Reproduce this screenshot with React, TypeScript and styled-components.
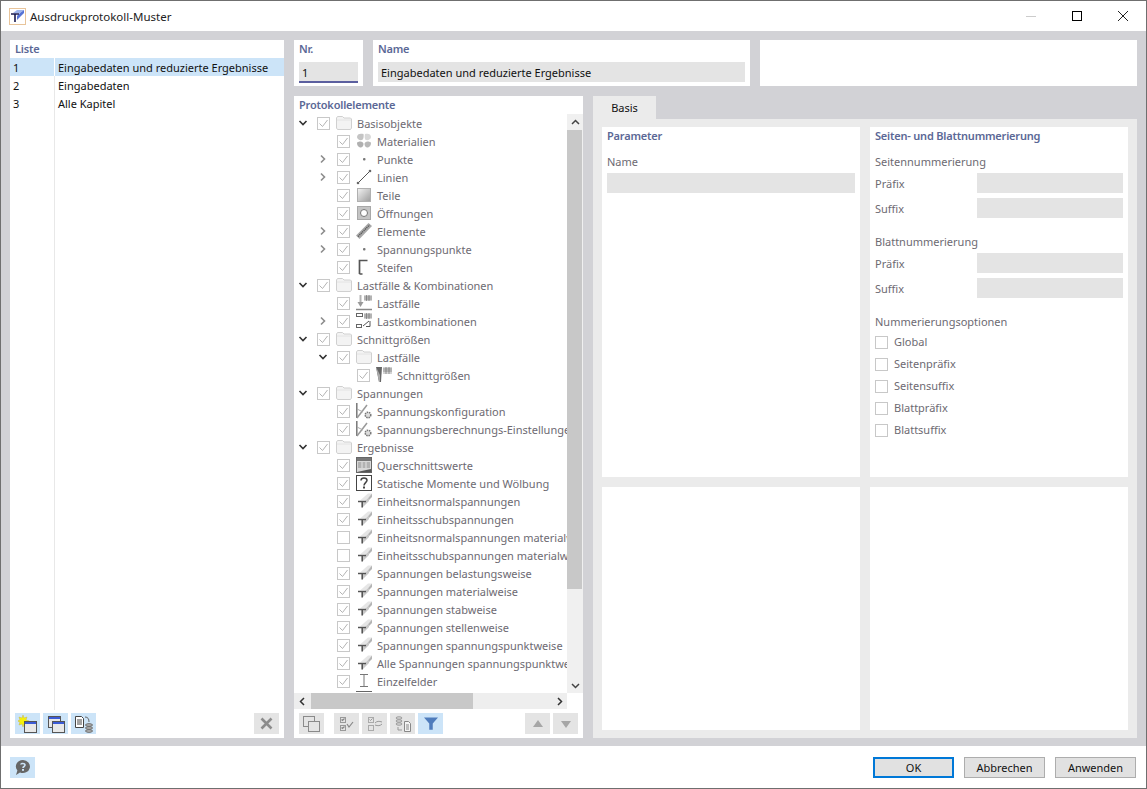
import { FC, ReactNode } from 'react';
import styled, { createGlobalStyle } from 'styled-components';

type IconName =
  | 'folder' | 'materials' | 'point' | 'line' | 'part' | 'opening' | 'element' | 'stiffener'
  | 'loadCase' | 'loadCombo' | 'forces' | 'config' | 'table' | 'question' | 'beam' | 'ibeam' | 'cut';

interface TreeItem {
  level: number;
  label?: string;
  icon: IconName;
  toggle?: 'open' | 'closed';
  unchecked?: boolean;
}

const tree: TreeItem[] = [
  { level: 0, label: 'Basisobjekte', icon: 'folder', toggle: 'open' },
  { level: 1, label: 'Materialien', icon: 'materials' },
  { level: 1, label: 'Punkte', icon: 'point', toggle: 'closed' },
  { level: 1, label: 'Linien', icon: 'line', toggle: 'closed' },
  { level: 1, label: 'Teile', icon: 'part' },
  { level: 1, label: 'Öffnungen', icon: 'opening' },
  { level: 1, label: 'Elemente', icon: 'element', toggle: 'closed' },
  { level: 1, label: 'Spannungspunkte', icon: 'point', toggle: 'closed' },
  { level: 1, label: 'Steifen', icon: 'stiffener' },
  { level: 0, label: 'Lastfälle & Kombinationen', icon: 'folder', toggle: 'open' },
  { level: 1, label: 'Lastfälle', icon: 'loadCase' },
  { level: 1, label: 'Lastkombinationen', icon: 'loadCombo', toggle: 'closed' },
  { level: 0, label: 'Schnittgrößen', icon: 'folder', toggle: 'open' },
  { level: 1, label: 'Lastfälle', icon: 'folder', toggle: 'open' },
  { level: 2, label: 'Schnittgrößen', icon: 'forces' },
  { level: 0, label: 'Spannungen', icon: 'folder', toggle: 'open' },
  { level: 1, label: 'Spannungskonfiguration', icon: 'config' },
  { level: 1, label: 'Spannungsberechnungs-Einstellungen', icon: 'config' },
  { level: 0, label: 'Ergebnisse', icon: 'folder', toggle: 'open' },
  { level: 1, label: 'Querschnittswerte', icon: 'table' },
  { level: 1, label: 'Statische Momente und Wölbung', icon: 'question' },
  { level: 1, label: 'Einheitsnormalspannungen', icon: 'beam' },
  { level: 1, label: 'Einheitsschubspannungen', icon: 'beam' },
  { level: 1, label: 'Einheitsnormalspannungen materialweise', icon: 'beam', unchecked: true },
  { level: 1, label: 'Einheitsschubspannungen materialweise', icon: 'beam', unchecked: true },
  { level: 1, label: 'Spannungen belastungsweise', icon: 'beam' },
  { level: 1, label: 'Spannungen materialweise', icon: 'beam' },
  { level: 1, label: 'Spannungen stabweise', icon: 'beam' },
  { level: 1, label: 'Spannungen stellenweise', icon: 'beam' },
  { level: 1, label: 'Spannungen spannungspunktweise', icon: 'beam' },
  { level: 1, label: 'Alle Spannungen spannungspunktweise', icon: 'beam' },
  { level: 1, label: 'Einzelfelder', icon: 'ibeam' },
  { level: 1, icon: 'cut' },
];

const protocols = [
  { nr: 1, name: 'Eingabedaten und reduzierte Ergebnisse' },
  { nr: 2, name: 'Eingabedaten' },
  { nr: 3, name: 'Alle Kapitel' },
];

const options = ['Global', 'Seitenpräfix', 'Seitensuffix', 'Blattpräfix', 'Blattsuffix'];

const tableGrid = (
  <>
    <path d="M8 0h8v6H8z" fill="#d4d4d4" />
    <path d="M8 2h8M8 4h8M10.500 0v6M13 0v6" stroke="#666" strokeWidth=".6" />
  </>
);

const TreeIcon: FC<{ name: IconName }> = ({ name }) => {
  const shapes: Record<IconName, ReactNode> = {
    folder: (
      <>
        <path d="M.5 13V3L1.500 1.500h5L8 3h6.500l1 1v9l-1 1.500h-13z" fill="#f3f3f3" stroke="#d0d0d0" />
        <path d="M1 5h14" stroke="#e4e4e4" />
      </>
    ),
    materials: (
      <>
        <path d="M7.500 1C4 0 1 1 1 4c0 2.500 3 3.500 5 3 1.500-.5 2-3.500 1.500-6z" fill="#c4c4c4" />
        <path d="M9 1c3-1 6 0 6 3 0 2.500-3 3.500-5 3C8.500 6.500 8.500 3.500 9 1z" fill="#d8d8d8" />
        <path d="M1 10c0-1 2-1.500 3.500-1.500S7.500 9.500 7.500 11c0 2-1.500 4-3.500 3.500S1 12 1 10z" fill="#b0b0b0" />
        <path d="M15 10c0-1-2-1.500-3.500-1.500S8.500 9.500 8.500 11c0 2 1.500 4 3.500 3.500s3-2.500 3-4.500z" fill="#b8b8b8" />
      </>
    ),
    point: <rect x="7" y="7" width="2.500" height="2.500" rx="1" fill="#777" />,
    line: (
      <>
        <path d="M2 14L14 2" stroke="#555" strokeWidth="1" />
        <circle cx="2" cy="14" r="1.300" fill="#666" />
        <circle cx="14" cy="2" r="1.300" fill="#666" />
      </>
    ),
    part: (
      <>
        <defs>
          <linearGradient id="partFill" x1="0" y1="0" x2="1" y2="1">
            <stop offset="0" stopColor="#f4f4f4" />
            <stop offset="1" stopColor="#9c9c9c" />
          </linearGradient>
        </defs>
        <rect x="1.500" y="1.500" width="13" height="13" fill="url(#partFill)" stroke="#b0b0b0" />
      </>
    ),
    opening: (
      <>
        <rect x="1.500" y="1.500" width="13" height="13" fill="#c4c4c4" stroke="#a8a8a8" />
        <circle cx="8" cy="8" r="3.500" fill="#fff" stroke="#777" />
      </>
    ),
    element: (
      <>
        <path d="M0 12.500L12.500 0 16 3 3.500 16z" fill="#a8a8a8" />
        <path d="M2 13.500L13.500 2" stroke="#555" strokeDasharray="1.200 .8" strokeWidth="1.400" />
      </>
    ),
    stiffener: <path d="M3.500 15V1.500h8M3.500 15h3" fill="none" stroke="#555" strokeWidth="1.700" />,
    loadCase: (
      <>
        <path d="M4.500 0v8" stroke="#b4b4b4" strokeWidth="2" />
        <path d="M1.500 7h6l-3 5z" fill="#999" />
        <path d="M0 14.500h16" stroke="#888" strokeWidth="1.500" />
        {tableGrid}
      </>
    ),
    loadCombo: (
      <>
        <rect x="0.500" y="0.500" width="6" height="3" fill="#fff" stroke="#666" />
        {tableGrid}
        <rect x="0.500" y="11.500" width="5" height="3" fill="#fff" stroke="#666" />
        <path d="M7 13l6-5M10 13.500h4V8" fill="none" stroke="#555" />
      </>
    ),
    forces: (
      <>
        <path d="M0 0h6l-1 15H3z" fill="#666" />
        <path d="M0 0l4 8v7H3z" fill="#aaa" />
        <path d="M7 0h9v7H7z" fill="#d4d4d4" />
        <path d="M7 2h9M7 4h9M10 0v7M13 0v7" stroke="#666" strokeWidth=".6" />
      </>
    ),
    config: (
      <>
        <path d="M.8 0v15" fill="none" stroke="#777" strokeWidth="1.500" />
        <path d="M1 15L11 2" stroke="#999" strokeWidth="1.500" />
        <path d="M1 6l6 3" stroke="#aaa" />
        <circle cx="12" cy="12" r="2.800" fill="#ddd" stroke="#777" strokeDasharray="1.500 .8" strokeWidth="1.500" />
      </>
    ),
    table: (
      <>
        <rect x="0.500" y="0.500" width="15" height="15" fill="#d8d8d8" stroke="#666" />
        <path d="M1 1h14v3H1z" fill="#777" />
        <path d="M2 6h12M2 8h12M2 10h12" stroke="#8c8c8c" />
        <path d="M6 5v6M10 5v6" stroke="#e4e4e4" />
        <path d="M1 15L15 12v3z" fill="#555" />
      </>
    ),
    question: (
      <>
        <rect x="0.500" y="0.500" width="15" height="15" fill="#fff" stroke="#444" />
        <path d="M5 5.500C5 3.500 6.500 3 8 3s3 1 3 2.500S8 8 8 10.500" fill="none" stroke="#444" strokeWidth="1.500" />
        <rect x="7" y="11.500" width="2" height="2" fill="#444" />
      </>
    ),
    beam: (
      <>
        <path d="M4 7.500L12 .5h4l-6 7z" fill="#e6e6e6" />
        <path d="M10 7.500L16 .5v3.500L10 10z" fill="#b4b4b4" />
        <path d="M7 9.500L13 5v3l-6 6z" fill="#c8c8c8" />
        <path d="M2 8.500h8" stroke="#555" strokeWidth="1.500" />
        <path d="M6.200 9v5.500" stroke="#555" strokeWidth="1.600" />
      </>
    ),
    ibeam: <path d="M4 1.500h8M4 13.500h8M8 1.500v12" fill="none" stroke="#777" />,
    cut: <path d="M0 0.500h16" stroke="#666" />,
  };
  return <TreeSvg viewBox="0 0 16 16">{shapes[name]}</TreeSvg>;
};

const CheckBox: FC<{ checked?: boolean }> = ({ checked }) => (
  <CheckFrame>
    {checked && (
      <svg width="11" height="11" viewBox="0 0 11 11">
        <path d="M1.500 5.500l3 3 5-6.500" fill="none" stroke="#b4b4b4" strokeWidth="1" />
      </svg>
    )}
  </CheckFrame>
);

const Chevron: FC<{ state?: 'open' | 'closed' }> = ({ state }) => (
  <ChevronSlot>
    {state === 'open' && (
      <svg width="10" height="10" viewBox="0 0 10 10">
        <path d="M1.500 3L5 6.500 8.500 3" fill="none" stroke="#333" strokeWidth="1.600" />
      </svg>
    )}
    {state === 'closed' && (
      <svg width="10" height="10" viewBox="0 0 10 10">
        <path d="M3 1.500L6.500 5 3 8.500" fill="none" stroke="#8c8c8c" strokeWidth="1.600" />
      </svg>
    )}
  </ChevronSlot>
);

const WindowSvg: FC<{ x: number; y: number }> = ({ x, y }) => (
  <g transform={`translate(${x} ${y})`}>
    <rect x="0.500" y="0.500" width="12" height="11" fill="#e8e8e8" stroke="#555" />
    <rect x="1" y="1" width="11" height="2" fill="#3b5bd6" />
  </g>
);

export default function App() {
  return (
    <>
      <GlobalStyle />
      <Window>
        <TitleBar>
          <svg width="17" height="17" viewBox="0 0 17 17">
            <rect x="0.500" y="0.500" width="16" height="16" fill="#fff" stroke="#e8c49a" />
            <path d="M4 5L8 2h7l-4 3z" fill="#9db4ec" />
            <path d="M11 5l4-3v3l-7 7V8z" fill="#5673d6" />
            <path d="M2 6h8M6 6v8" stroke="#1a1a50" strokeWidth="1.600" fill="none" />
          </svg>
          <TitleText>Ausdruckprotokoll-Muster</TitleText>
          <WindowControls>
            <ControlButton>
              <svg width="10" height="10" viewBox="0 0 10 10"><path d="M0 5.500h10" stroke="#ccc" /></svg>
            </ControlButton>
            <ControlButton>
              <svg width="10" height="10" viewBox="0 0 10 10"><rect x="0.500" y="0.500" width="9" height="9" fill="none" stroke="#000" /></svg>
            </ControlButton>
            <ControlButton>
              <svg width="10" height="10" viewBox="0 0 10 10"><path d="M0 0l10 10M10 0L0 10" stroke="#222" /></svg>
            </ControlButton>
          </WindowControls>
        </TitleBar>

        <Body>
          <ListPanel>
            <PanelTitle>Liste</PanelTitle>
            <ListArea>
              {protocols.map(p => (
                <ListRow key={p.nr} $selected={p.nr === 1}>
                  <ListNr $selected={p.nr === 1}>{p.nr}</ListNr>
                  <ListName>{p.name}</ListName>
                </ListRow>
              ))}
              <ListRest><ListNr /><ListName /></ListRest>
            </ListArea>
            <Toolbar>
              <ToolButton $tone="blue">
                <svg width="20" height="18" viewBox="0 0 20 18">
                  <path d="M5 0l1 3 3-1-1 3 3 1-3 1 1 3-3-1-1 3-1-3-3 1 1-3-3-1 3-1-1-3 3 1z" fill="#f5f10a" stroke="#c9b84a" strokeWidth=".5" />
                  <WindowSvg x={6} y={6} />
                </svg>
              </ToolButton>
              <ToolButton $tone="blue">
                <svg width="20" height="18" viewBox="0 0 20 18">
                  <WindowSvg x={2} y={1} />
                  <WindowSvg x={6} y={6} />
                </svg>
              </ToolButton>
              <ToolButton $tone="blue">
                <svg width="20" height="18" viewBox="0 0 20 18">
                  <path d="M1.500 1.500h6l2 2v9h-8z" fill="#fff" stroke="#444" />
                  <path d="M3 5h5M3 7h5M3 9h5" stroke="#444" />
                  <path d="M11 2c3 0 4 2 4 5" fill="none" stroke="#666" />
                  <ellipse cx="15" cy="10" rx="3.500" ry="1.300" fill="#bbb" stroke="#666" />
                  <ellipse cx="15" cy="13" rx="3.500" ry="1.300" fill="#bbb" stroke="#666" />
                  <ellipse cx="15" cy="16" rx="3.500" ry="1.300" fill="#bbb" stroke="#666" />
                </svg>
              </ToolButton>
              <ToolSpacer />
              <ToolButton>
                <svg width="13" height="13" viewBox="0 0 13 13"><path d="M1.500 1.500l10 10M11.500 1.500l-10 10" stroke="#8c8c8c" strokeWidth="2.600" /></svg>
              </ToolButton>
            </Toolbar>
          </ListPanel>

          <TopRow>
            <NrCard>
              <CardTitle>Nr.</CardTitle>
              <NrField>1</NrField>
            </NrCard>
            <NameCard>
              <CardTitle>Name</CardTitle>
              <NameField>Eingabedaten und reduzierte Ergebnisse</NameField>
            </NameCard>
            <NameCard />
          </TopRow>

          <TreePanel>
            <PanelTitle>Protokollelemente</PanelTitle>
            <TreeGrid>
              <TreeViewport>
                {tree.map((item, i) => (
                  <TreeRow key={i} $level={item.level}>
                    <Chevron state={item.toggle} />
                    <CheckBox checked={!item.unchecked} />
                    <TreeIcon name={item.icon} />
                    <TreeLabel>{item.label}</TreeLabel>
                  </TreeRow>
                ))}
              </TreeViewport>
              <VScroll>
                <ScrollArrow>
                  <svg width="9" height="9" viewBox="0 0 9 9"><path d="M1 6l3.500-3.500L8 6" fill="none" stroke="#444" strokeWidth="1.500" /></svg>
                </ScrollArrow>
                <VThumb />
                <VTrack />
                <ScrollArrow>
                  <svg width="9" height="9" viewBox="0 0 9 9"><path d="M1 3l3.500 3.500L8 3" fill="none" stroke="#444" strokeWidth="1.500" /></svg>
                </ScrollArrow>
              </VScroll>
              <HScroll>
                <ScrollArrow>
                  <svg width="9" height="9" viewBox="0 0 9 9"><path d="M6 1L2.500 4.500 6 8" fill="none" stroke="#333" strokeWidth="1.500" /></svg>
                </ScrollArrow>
                <HThumb />
                <HTrack />
                <ScrollArrow>
                  <svg width="9" height="9" viewBox="0 0 9 9"><path d="M3 1l3.500 3.500L3 8" fill="none" stroke="#333" strokeWidth="1.500" /></svg>
                </ScrollArrow>
              </HScroll>
            </TreeGrid>
            <Toolbar>
              <ToolButton>
                <svg width="20" height="18" viewBox="0 0 20 18">
                  <rect x="1.500" y="1.500" width="11" height="10" fill="#e4e4e4" stroke="#8a8a8a" />
                  <rect x="6.500" y="6.500" width="11" height="10" fill="#e4e4e4" stroke="#8a8a8a" />
                </svg>
              </ToolButton>
              <ToolGap />
              <ToolButton>
                <svg width="20" height="18" viewBox="0 0 20 18">
                  <rect x="3.500" y="2.500" width="5" height="5" fill="none" stroke="#999" />
                  <rect x="3.500" y="10.500" width="5" height="5" fill="none" stroke="#999" />
                  <path d="M4.500 4.500l1 1 2-2M4.500 12.500l1 1 2-2M10 9l2 3 4-5" fill="none" stroke="#888" strokeWidth="1.200" />
                </svg>
              </ToolButton>
              <ToolButton>
                <svg width="20" height="18" viewBox="0 0 20 18">
                  <rect x="3.500" y="2.500" width="5" height="5" fill="none" stroke="#aaa" />
                  <rect x="3.500" y="10.500" width="5" height="5" fill="none" stroke="#aaa" />
                  <path d="M4.500 4.500l1 1 2-2M10 8c2-2 4-2 7-1M17 9c-2 2-4 2-7 1" fill="none" stroke="#999" />
                </svg>
              </ToolButton>
              <ToolButton>
                <svg width="20" height="18" viewBox="0 0 20 18">
                  <ellipse cx="6" cy="3" rx="3" ry="1.200" fill="#ddd" stroke="#999" />
                  <ellipse cx="6" cy="6" rx="3" ry="1.200" fill="#ddd" stroke="#999" />
                  <ellipse cx="6" cy="9" rx="3" ry="1.200" fill="#ddd" stroke="#999" />
                  <path d="M5 12v3h4" fill="none" stroke="#999" />
                  <path d="M11.500 6.500h4l2 2v8h-6z" fill="#f4f4f4" stroke="#888" />
                  <path d="M13 10h3M13 12h3M13 14h3" stroke="#888" />
                </svg>
              </ToolButton>
              <ToolButton $tone="blue">
                <svg width="14" height="13" viewBox="0 0 16 14"><path d="M0 0h16L10 7v7H6V7z" fill="#4f7cbc" /></svg>
              </ToolButton>
              <ToolSpacer />
              <ToolButton>
                <svg width="10" height="8" viewBox="0 0 10 8"><path d="M5 0l5 7H0z" fill="#a6a6a6" /></svg>
              </ToolButton>
              <ToolButton>
                <svg width="10" height="8" viewBox="0 0 10 8"><path d="M0 1h10L5 8z" fill="#a6a6a6" /></svg>
              </ToolButton>
            </Toolbar>
          </TreePanel>

          <TabArea>
            <Tab>Basis</Tab>
            <TabContent>
              <SubPanel>
                <SubTitle>Parameter</SubTitle>
                <FormLabel>Name</FormLabel>
                <WideField />
              </SubPanel>
              <SubPanel>
                <SubTitle>Seiten- und Blattnummerierung</SubTitle>
                <FormLabel>Seitennummerierung</FormLabel>
                <FieldRow><RowLabel>Präfix</RowLabel><RowField /></FieldRow>
                <FieldRow><RowLabel>Suffix</RowLabel><RowField /></FieldRow>
                <FormLabel $spaced>Blattnummerierung</FormLabel>
                <FieldRow><RowLabel>Präfix</RowLabel><RowField /></FieldRow>
                <FieldRow><RowLabel>Suffix</RowLabel><RowField /></FieldRow>
                <OptionsLabel>Nummerierungsoptionen</OptionsLabel>
                {options.map(o => (
                  <OptionRow key={o}>
                    <CheckBox />
                    <OptionLabel>{o}</OptionLabel>
                  </OptionRow>
                ))}
              </SubPanel>
              <SubPanel />
              <SubPanel />
            </TabContent>
          </TabArea>
        </Body>

        <Footer>
          <ToolButton $tone="blue">
            <svg width="18" height="17" viewBox="0 0 18 17">
              <path d="M9 1a7 6.500 0 1 1-3 12.400L2 16l1.400-4.500A7 6.500 0 0 1 9 1z" fill="#666" />
              <path d="M6.800 5.500C7 4 11 4 11 6c0 1.500-2 1.500-2 3" fill="none" stroke="#cce4f8" strokeWidth="1.600" />
              <rect x="8" y="10" width="2" height="1.800" fill="#cce4f8" />
            </svg>
          </ToolButton>
          <ToolSpacer />
          <DialogButton $primary>OK</DialogButton>
          <DialogButton>Abbrechen</DialogButton>
          <DialogButton>Anwenden</DialogButton>
        </Footer>
      </Window>
    </>
  );
}

const uiFont = `"Noto Sans", "Open Sans", sans-serif`;

const GlobalStyle = createGlobalStyle`
  html, body {
    margin: 0;
    padding: 0;
    background: #fff;
  }
`;

const Window = styled.div`
  box-sizing: border-box;
  width: 1147px;
  height: 789px;
  display: flex;
  flex-direction: column;
  border: 1px solid #6f6f6f;
  background: #fff;
  font-family: ${uiFont};
  font-size: 11px;
  color: #111;
  overflow: hidden;
`;

const TitleBar = styled.div`
  height: 30px;
  flex: none;
  display: flex;
  align-items: center;
  padding-left: 8px;
`;

const TitleText = styled.div`
  margin-left: 4px;
  font-size: 11.5px;
  color: #222;
`;

const WindowControls = styled.div`
  margin-left: auto;
  display: flex;
`;

const ControlButton = styled.div`
  width: 46px;
  height: 30px;
  display: flex;
  align-items: center;
  justify-content: center;
`;

const Body = styled.div`
  flex: 1;
  min-height: 0;
  display: grid;
  grid-template-columns: 274px 289px 544px;
  grid-template-rows: 46px 642px;
  gap: 10px;
  padding: 9px 9px 8px;
  background: #d2d2d6;
`;

const Panel = styled.div`
  background: #fff;
  display: flex;
  flex-direction: column;
  min-height: 0;
  min-width: 0;
`;

const ListPanel = styled(Panel)`
  grid-row: 1 / 3;
`;

const PanelTitle = styled.div`
  height: 18px;
  flex: none;
  line-height: 18px;
  padding-left: 5px;
  font-weight: 600;
  letter-spacing: -0.2px;
  color: #5b6896;
`;

const ListArea = styled.div`
  flex: 1;
  display: flex;
  flex-direction: column;
`;

const ListRow = styled.div<{ $selected?: boolean }>`
  height: 18px;
  display: flex;
  line-height: 20px;
  background: ${p => (p.$selected ? '#cce4f8' : 'transparent')};
`;

const ListRest = styled.div`
  flex: 1;
  display: flex;
  margin-bottom: -1px;
`;

const ListNr = styled.div<{ $selected?: boolean }>`
  width: 45px;
  padding-left: 3px;
  box-sizing: border-box;
  border-right: 1px solid ${p => (p.$selected ? '#ffffff' : '#e8e8e8')};
`;

const ListName = styled.div`
  padding-left: 3px;
  flex: 1;
  white-space: nowrap;
`;

const Toolbar = styled.div`
  height: 29px;
  flex: none;
  box-sizing: border-box;
  padding: 4px 5px 4px;
  display: flex;
  gap: 3px;
`;

const ToolButton = styled.div<{ $tone?: 'blue' }>`
  width: 25px;
  height: 21px;
  flex: none;
  display: flex;
  align-items: center;
  justify-content: center;
  background: ${p => (p.$tone === 'blue' ? '#cce4f8' : '#e4e4e4')};
`;

const ToolSpacer = styled.div`
  flex: 1;
`;

const ToolGap = styled.div`
  width: 4px;
  flex: none;
`;

const TopRow = styled.div`
  grid-column: 2 / 4;
  display: flex;
  gap: 10px;
`;

const NrCard = styled(Panel)`
  width: 69px;
  flex: none;
`;

const NameCard = styled(Panel)`
  width: 377px;
  flex: none;
`;

const CardTitle = styled(PanelTitle)`
  height: 22px;
  line-height: 18px;
`;

const NrField = styled.div`
  box-sizing: border-box;
  width: 59px;
  height: 21px;
  margin-left: 5px;
  padding-left: 3px;
  line-height: 21px;
  background: #e4e4e4;
  border-bottom: 2px solid #5b5f9f;
`;

const NameField = styled.div`
  box-sizing: border-box;
  height: 20px;
  margin: 0 5px;
  padding-left: 3px;
  line-height: 22px;
  background: #e4e4e4;
`;

const TreePanel = styled(Panel)``;

const TreeGrid = styled.div`
  display: grid;
  grid-template-columns: 273px 16px;
  grid-template-rows: 579px 16px;
  flex: none;
`;

const TreeViewport = styled.div`
  overflow: hidden;
`;

const TreeRow = styled.div<{ $level: number }>`
  height: 18px;
  display: flex;
  align-items: center;
  padding-left: ${p => p.$level * 20}px;
  white-space: nowrap;
`;

const ChevronSlot = styled.div`
  width: 23px;
  flex: none;
  padding-left: 4px;
  box-sizing: border-box;
  display: flex;
  align-items: center;
`;

const CheckFrame = styled.div`
  box-sizing: border-box;
  width: 13px;
  height: 13px;
  flex: none;
  border: 1px solid #c8c8c8;
  background: #fff;
  display: flex;
  align-items: center;
  justify-content: center;
`;

const TreeSvg = styled.svg`
  width: 16px;
  height: 16px;
  flex: none;
  margin: 0 5px 0 6px;
`;

const TreeLabel = styled.span`
  color: #6d6a72;
`;

const VScroll = styled.div`
  display: flex;
  flex-direction: column;
  background: #f0f0f0;
`;

const ScrollArrow = styled.div`
  width: 16px;
  height: 16px;
  flex: none;
  display: flex;
  align-items: center;
  justify-content: center;
`;

const VThumb = styled.div`
  height: 459px;
  width: 15px;
  background: #c8c8c8;
`;

const VTrack = styled.div`
  flex: 1;
`;

const HScroll = styled.div`
  display: flex;
  background: #eeeeee;
`;

const HThumb = styled.div`
  width: 162px;
  height: 16px;
  margin-left: 1px;
  background: #c8c8c8;
`;

const HTrack = styled.div`
  flex: 1;
`;

const TabArea = styled.div`
  display: flex;
  flex-direction: column;
  align-items: flex-start;
`;

const Tab = styled.div`
  width: 63px;
  height: 23px;
  flex: none;
  text-align: center;
  line-height: 24px;
  background: #ebebeb;
`;

const TabContent = styled.div`
  flex: 1;
  align-self: stretch;
  box-sizing: border-box;
  display: grid;
  grid-template-columns: 258px 258px;
  grid-template-rows: 350px 243px;
  gap: 10px;
  padding: 8px 9px;
  background: #ebebeb;
`;

const SubPanel = styled.div`
  background: #fff;
  padding: 0 5px;
`;

const SubTitle = styled.div`
  height: 17px;
  line-height: 17px;
  margin-bottom: 9px;
  font-weight: 600;
  letter-spacing: -0.2px;
  color: #5b6896;
`;

const FormLabel = styled.div<{ $spaced?: boolean }>`
  height: 18px;
  line-height: 18px;
  margin-top: ${p => (p.$spaced ? '15px' : '0')};
  margin-bottom: 2px;
  color: #6d6a72;
`;

const OptionsLabel = styled(FormLabel)`
  margin-top: 15px;
  margin-bottom: 0;
`;

const WideField = styled.div`
  height: 20px;
  background: #e4e4e4;
`;

const FieldRow = styled.div`
  height: 20px;
  margin-bottom: 5px;
  display: flex;
  align-items: center;
`;

const RowLabel = styled.div`
  width: 102px;
  flex: none;
  padding-top: 1px;
  color: #6d6a72;
`;

const RowField = styled.div`
  flex: 1;
  height: 20px;
  background: #e4e4e4;
`;

const OptionRow = styled.div`
  height: 22px;
  display: flex;
  align-items: center;
  gap: 6px;
`;

const OptionLabel = styled.span`
  padding-bottom: 2px;
  color: #6d6a72;
`;

const Footer = styled.div`
  height: 42px;
  flex: none;
  box-sizing: border-box;
  display: flex;
  align-items: center;
  gap: 10px;
  padding: 0 10px 0 9px;
`;

const DialogButton = styled.div<{ $primary?: boolean }>`
  box-sizing: border-box;
  width: 81px;
  height: 21px;
  flex: none;
  display: flex;
  align-items: center;
  justify-content: center;
  font-size: 11px;
  background: #e1e1e1;
  color: #111;
  border: ${p => (p.$primary ? '2px solid #0078d7' : '1px solid #adadad')};
`;
